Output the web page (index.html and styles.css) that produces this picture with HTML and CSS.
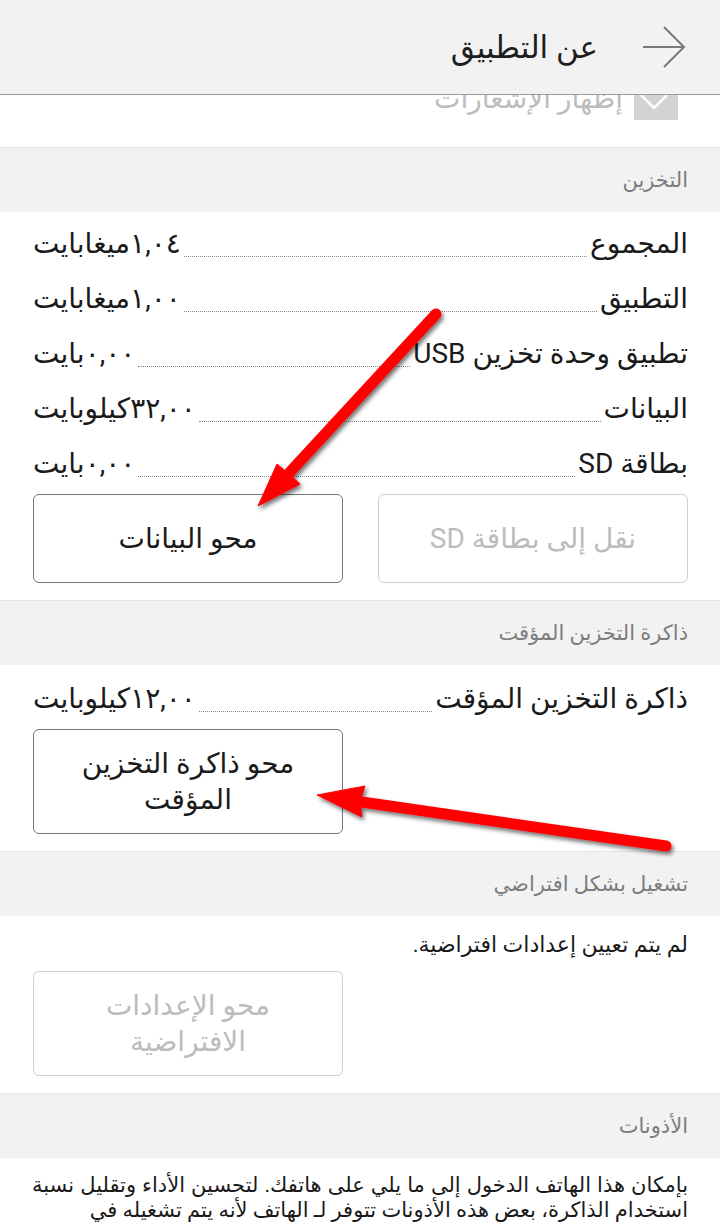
FILE: index.html
```html
<!DOCTYPE html>
<html lang="ar" dir="rtl">
<head>
<meta charset="utf-8">
<title>عن التطبيق</title>
<link rel="stylesheet" href="styles.css">
</head>
<body>
<div class="page">
  <header class="topbar">
    <svg class="back" width="44" height="44" viewBox="0 0 44 44" aria-hidden="true">
      <path d="M1 22 H42 M22 2 L42 22 L22 42" fill="none" stroke="#7a7a7a" stroke-width="2"/>
    </svg>
    <h1 class="title">عن التطبيق</h1>
  </header>

  <div class="partial">
    <div class="partial-inner">
      <span class="checkbox">
        <svg width="44" height="44" viewBox="0 0 44 44" aria-hidden="true">
          <path d="M7 19 L20 32 L33 19" fill="none" stroke="#fff" stroke-width="2.5"/>
        </svg>
      </span>
      <span class="partial-text">إظهار الإشعارات</span>
    </div>
  </div>

  <div class="sec-head">التخزين</div>
  <section class="sec sec-storage">
    <div class="row"><span class="lbl">المجموع</span><span class="dots"></span><span class="val">١,٠٤ميغابايت</span></div>
    <div class="row"><span class="lbl">التطبيق</span><span class="dots"></span><span class="val">١,٠٠ميغابايت</span></div>
    <div class="row"><span class="lbl">تطبيق وحدة تخزين USB</span><span class="dots"></span><span class="val">٠,٠٠بايت</span></div>
    <div class="row"><span class="lbl">البيانات</span><span class="dots"></span><span class="val">٣٢,٠٠كيلوبايت</span></div>
    <div class="row"><span class="lbl">بطاقة SD</span><span class="dots"></span><span class="val">٠,٠٠بايت</span></div>
    <div class="btn-row">
      <div class="btn disabled">نقل إلى بطاقة SD</div>
      <div class="btn">محو البيانات</div>
    </div>
  </section>

  <div class="sec-head">ذاكرة التخزين المؤقت</div>
  <section class="sec sec-cache">
    <div class="row"><span class="lbl">ذاكرة التخزين المؤقت</span><span class="dots"></span><span class="val">١٢,٠٠كيلوبايت</span></div>
    <div class="btn-row">
      <div class="spacer"></div>
      <div class="btn tall">محو ذاكرة التخزين<br>المؤقت</div>
    </div>
  </section>

  <div class="sec-head">تشغيل بشكل افتراضي</div>
  <section class="sec sec-default">
    <p class="note">لم يتم تعيين إعدادات افتراضية.</p>
    <div class="btn-row">
      <div class="spacer"></div>
      <div class="btn tall disabled">محو الإعدادات<br>الافتراضية</div>
    </div>
  </section>

  <div class="sec-head">الأذونات</div>
  <section class="perm">
    <span class="pline full">بإمكان هذا الهاتف الدخول إلى ما يلي على هاتفك. لتحسين الأداء وتقليل نسبة</span>
    <span class="pline">استخدام الذاكرة، بعض هذه الأذونات تتوفر لـ الهاتف لأنه يتم تشغيله في</span>
  </section>

  <svg class="annot" width="720" height="1223" viewBox="0 0 720 1223" aria-hidden="true">
    <defs>
      <filter id="sh" x="-20%" y="-20%" width="140%" height="140%">
        <feDropShadow dx="2" dy="3" stdDeviation="2.2" flood-color="#000" flood-opacity="0.55"/>
      </filter>
    </defs>
    <g filter="url(#sh)" fill="#ff0000" stroke="#ff0000">
      <line x1="436" y1="314" x2="290" y2="472" stroke-width="11" stroke-linecap="round"/>
      <polygon points="258,506 277,464 289,474 300,484" stroke-width="1"/>
      <line x1="666" y1="846" x2="355" y2="801" stroke-width="11" stroke-linecap="round"/>
      <polygon points="317,795 365,786 360,801 362,817" stroke-width="1"/>
    </g>
  </svg>
</div>
</body>
</html>
```
FILE: styles.css
```css
* { box-sizing: border-box; }
html, body { margin: 0; padding: 0; }
body {
  width: 720px;
  height: 1223px;
  overflow: hidden;
  background: #ffffff;
  font-family: Roboto, "DejaVu Sans", sans-serif;
  color: #1a1a1a;
}
.page { position: relative; width: 720px; }

.topbar {
  height: 95px;
  background: #f2f2f2;
  border-bottom: 1px solid #9c9c9c;
  display: flex;
  align-items: center;
  padding-right: 34px;
  gap: 44px;
}
.back { display: block; flex: none; }
.title {
  margin: 0;
  font-weight: normal;
  font-size: 31px;
  color: #1e1e1e;
}

.partial {
  height: 53px;
  overflow: hidden;
  border-bottom: 1px solid #e4e4e4;
  background: #fff;
}
.partial-inner {
  display: flex;
  align-items: center;
  gap: 11px;
  padding-right: 42px;
  margin-top: -19px;
  height: 44px;
}
.checkbox {
  width: 44px;
  height: 44px;
  background: #d3d3d3;
  flex: none;
}
.checkbox svg { display: block; }
.partial-text { font-size: 28px; color: #bdbdbd; }

.sec-head {
  height: 64px;
  background: #f2f2f2;
  display: flex;
  align-items: center;
  padding-right: 32px;
  font-size: 21px;
  color: #7d7d7d;
}

.sec {
  padding: 4px 32px 17px 33px;
  border-bottom: 1px solid #e6e6e6;
}
.sec-cache { padding-top: 6px; }
.sec-default { padding-top: 14px; }

.row {
  height: 55px;
  display: flex;
  align-items: center;
  font-size: 28px;
  color: #1a1a1a;
}
.lbl, .val { white-space: nowrap; }
.dots {
  flex: 1;
  align-self: flex-end;
  margin: 0 3px 14px;
  border-bottom: 1px dotted #8a8a8a;
}

.btn-row {
  display: flex;
  gap: 35px;
  margin-top: 3px;
}
.spacer { width: 310px; }
.btn {
  width: 310px;
  height: 89px;
  border: 1px solid #777;
  border-radius: 6px;
  display: flex;
  align-items: center;
  justify-content: center;
  text-align: center;
  font-size: 28px;
  color: #1a1a1a;
}
.btn.tall { height: 105px; line-height: 36px; }
.btn.disabled { border-color: #cfcfcf; color: #bcbcbc; }

.note {
  margin: 0 0 11px;
  font-size: 22px;
  color: #1a1a1a;
  height: 30px;
  line-height: 30px;
}

.perm {
  padding: 15px 32px 0 32px;
  font-size: 21px;
  line-height: 25px;
  color: #1a1a1a;
}
.pline { display: block; white-space: nowrap; }
.pline.full { text-align: justify; text-align-last: justify; }

.annot {
  position: absolute;
  left: 0;
  top: 0;
  pointer-events: none;
}
```
